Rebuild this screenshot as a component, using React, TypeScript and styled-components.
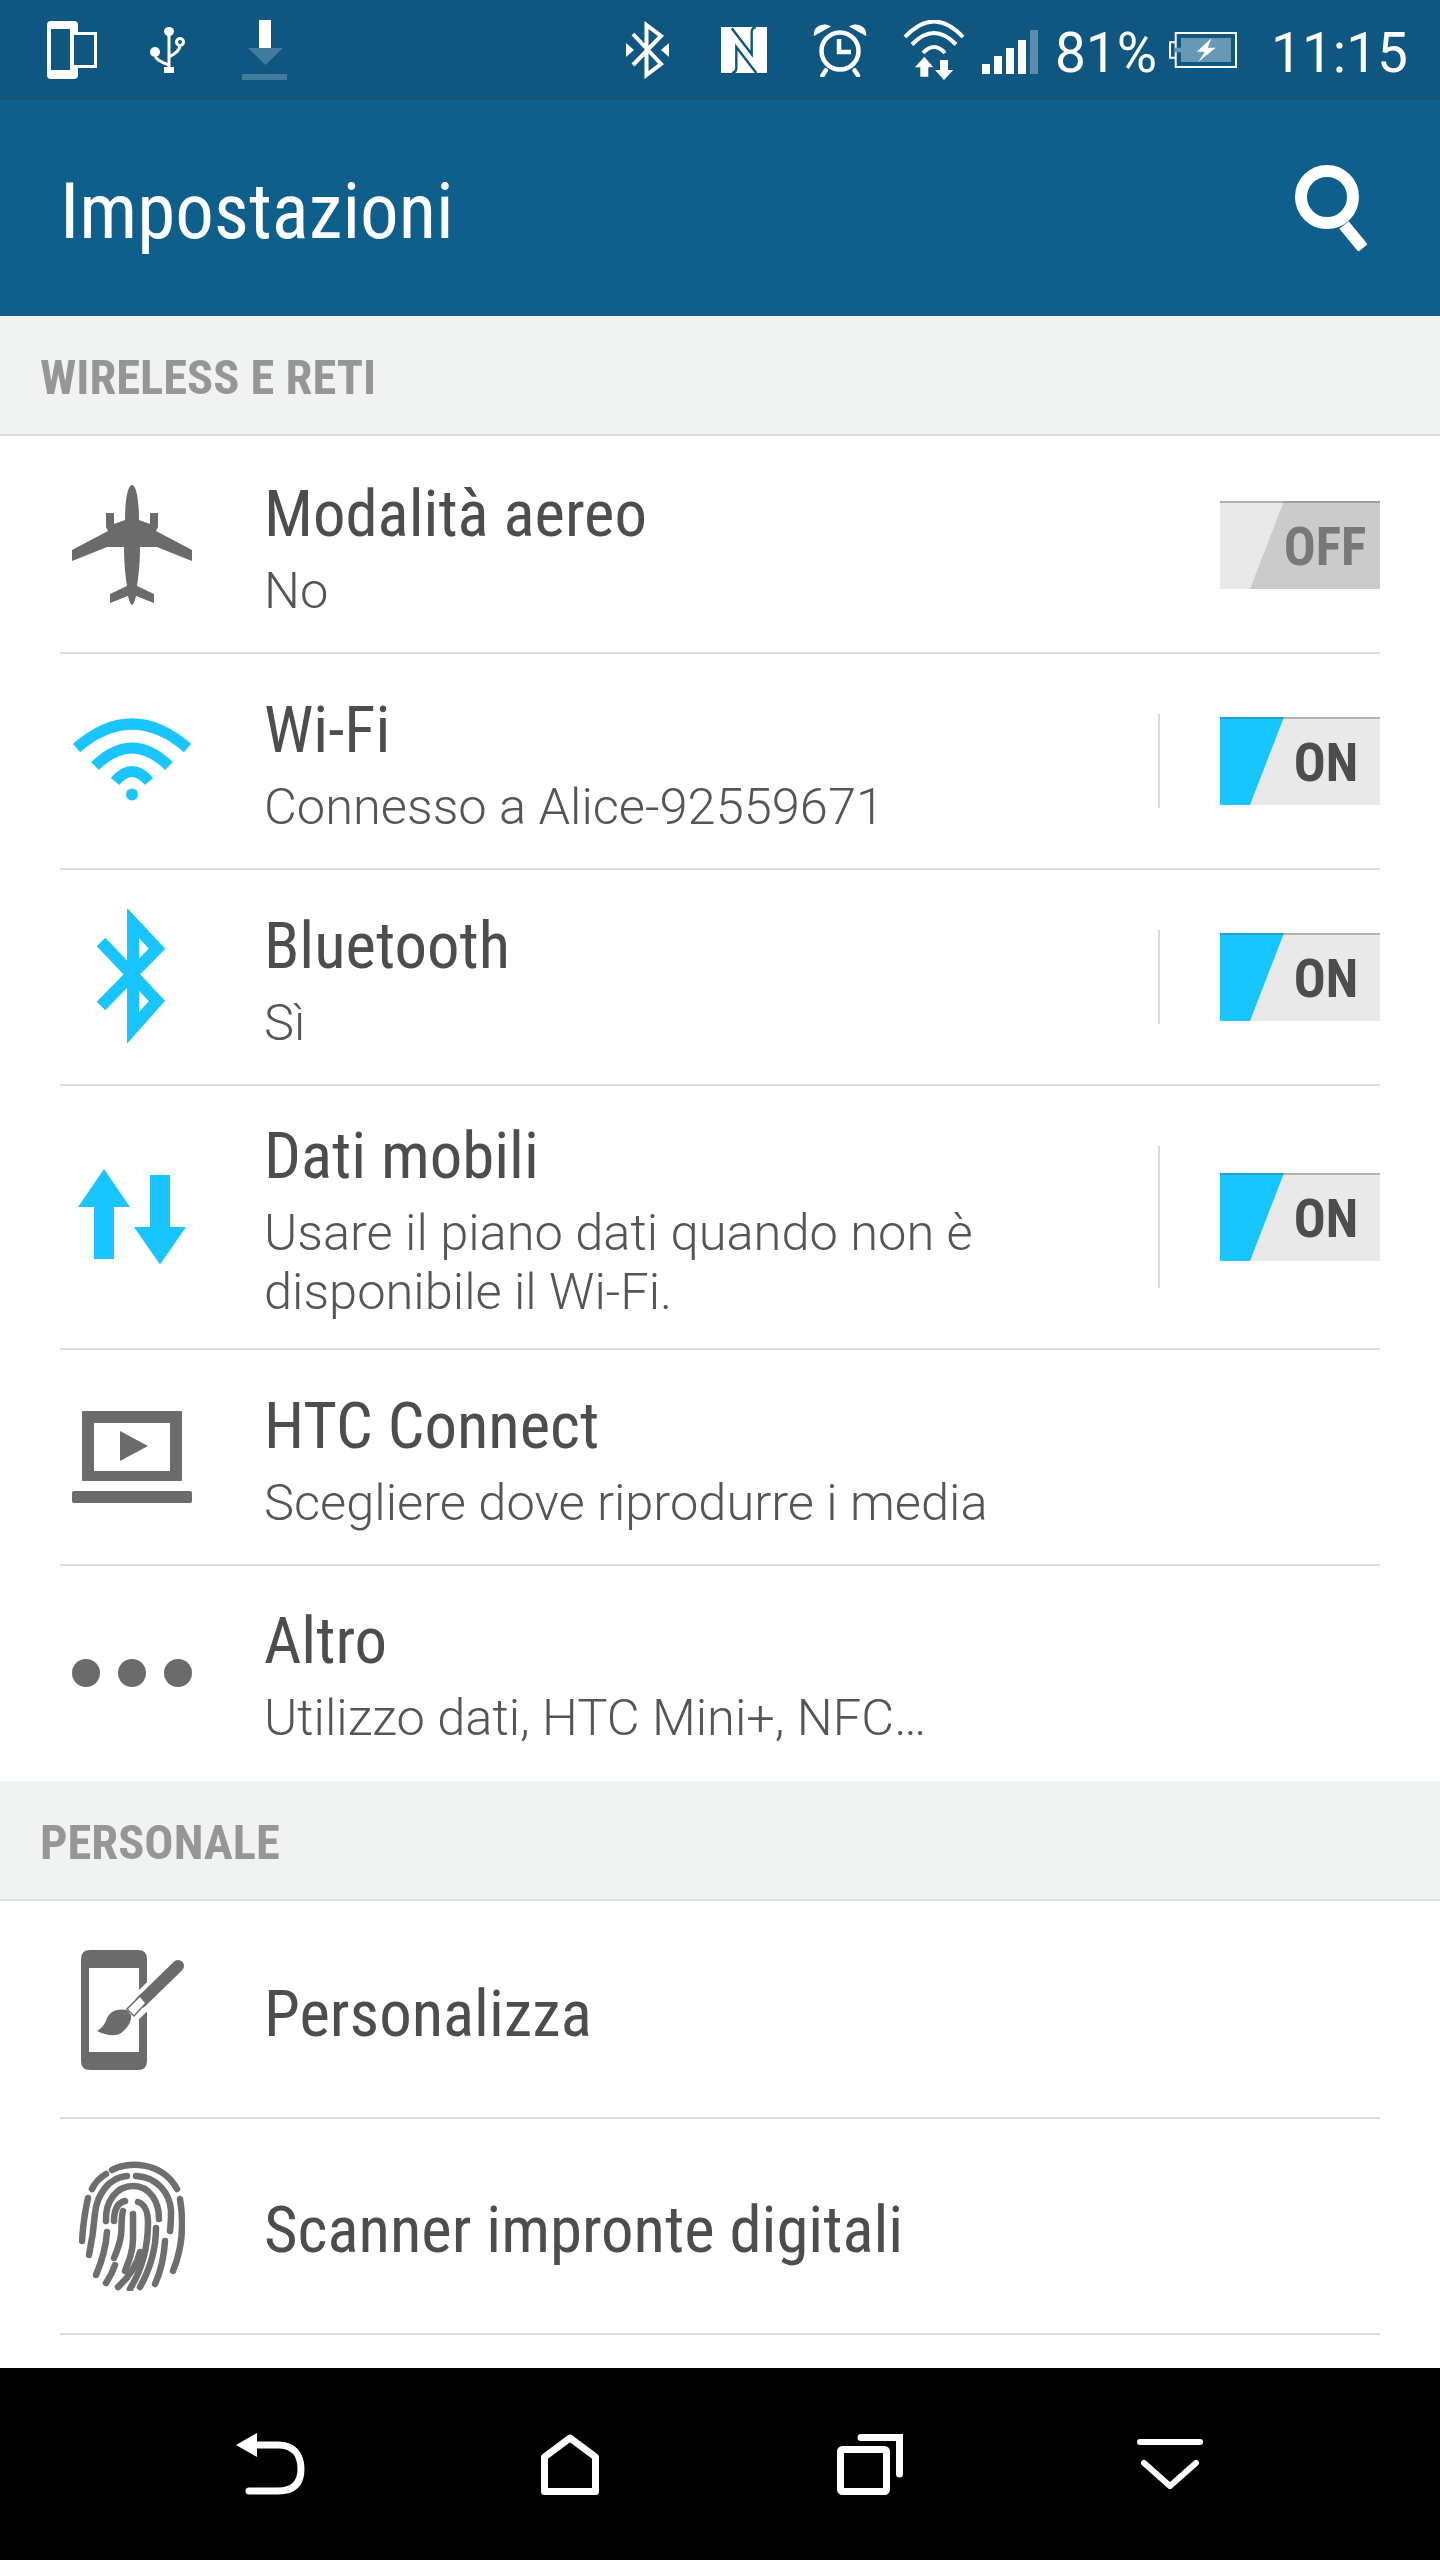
import React from 'react';
import styled, { createGlobalStyle } from 'styled-components';

const GlobalStyle = createGlobalStyle`
  html, body { margin: 0; padding: 0; background: #fff; }
  * { box-sizing: border-box; }
  #root { height: 2560px; }
`;

const Screen = styled.div`
  width: 1440px;
  height: 2560px;
  display: flex;
  flex-direction: column;
  overflow: hidden;
  background: #fff;
  font-family: Roboto, "Liberation Sans", sans-serif;
`;

const StatusBar = styled.div`
  height: 100px;
  flex: none;
  display: flex;
  align-items: center;
  justify-content: space-between;
  background: #0f5680;
  color: #fff;
  padding: 0 32px 0 47px;
`;

const StatusGroup = styled.div`
  display: flex;
  align-items: center;
`;

const BarIcon = styled.svg<{ $gap?: number }>`
  display: block;
  flex: none;
  margin-left: ${({ $gap }) => $gap ?? 0}px;
`;

const StatusText = styled.span<{ $gap: number }>`
  font-size: 55px;
  font-weight: 400;
  line-height: 64px;
  padding-top: 6px;
  margin-left: ${({ $gap }) => $gap}px;
  white-space: nowrap;
`;

const AppHeader = styled.header`
  height: 216px;
  flex: none;
  display: flex;
  align-items: center;
  justify-content: space-between;
  background: #0f5f8c;
  padding: 0 73px 0 60px;
`;

const HeaderTitle = styled.h1`
  margin: 0;
  padding-top: 8px;
  color: #fff;
  font-size: 77px;
  font-weight: 400;
  font-stretch: condensed;
  line-height: 90px;
`;

const SettingsList = styled.main`
  flex: 1;
  overflow: hidden;
`;

const SectionHeader = styled.div`
  height: 120px;
  margin-bottom: 2px;
  display: flex;
  align-items: center;
  padding: 4px 0 0 40px;
  background: #f1f3f2;
  border-bottom: 2px solid #ddd;
  color: #969696;
  font-size: 48.5px;
  font-weight: 700;
  font-stretch: condensed;
`;

const Row = styled.div<{ $tall?: boolean; $last?: boolean }>`
  height: ${({ $tall, $last }) => ($tall ? 264 : $last ? 215 : 216)}px;
  margin: 0 60px;
  display: flex;
  align-items: center;
  border-bottom: 2px solid ${({ $last }) => ($last ? 'transparent' : '#ddd')};
`;

const IconSlot = styled.div`
  width: 144px;
  flex: none;
  display: flex;
  align-items: center;
  justify-content: center;
`;

const RowIcon = styled.svg`
  display: block;
  flex: none;
`;

const RowText = styled.div`
  flex: 1;
  min-width: 0;
  margin-left: 60px;
  padding-top: 7px;
`;

const RowTitle = styled.div`
  color: #4d4d4d;
  font-size: 64.8px;
  font-weight: 400;
  font-stretch: condensed;
  line-height: 72px;
`;

const RowSubtitle = styled.div`
  margin-top: 11px;
  color: #555;
  font-size: 50.6px;
  font-weight: 300;
  line-height: 59px;
`;

const Separator = styled.div<{ $tall?: boolean }>`
  width: 2px;
  height: ${({ $tall }) => ($tall ? 142 : 94)}px;
  margin-right: 60px;
  background: #ddd;
  flex: none;
`;

const Toggle = styled.div<{ $on?: boolean }>`
  position: relative;
  width: 160px;
  height: 88px;
  flex: none;
  display: flex;
  align-items: center;
  justify-content: center;
  padding: 2px 0 0 ${({ $on }) => ($on ? 52 : 50)}px;
  border-top: 2px solid ${({ $on }) => ($on ? '#b3b3b3' : '#9e9e9e')};
  background: ${({ $on }) => ($on ? '#e9e9e9' : '#cbcbcb')};

  &::before {
    content: '';
    position: absolute;
    left: 0;
    top: -2px;
    width: 100%;
    height: 88px;
    clip-path: polygon(0 0, 64px 0, 30px 100%, 0 100%);
    background: ${({ $on }) =>
      $on
        ? 'linear-gradient(#1e9fcf 2px, #19c5ff 2px)'
        : 'linear-gradient(#b0b0b0 2px, #e9e9e9 2px)'};
  }
`;

const ToggleLabel = styled.span<{ $on?: boolean }>`
  position: relative;
  color: ${({ $on }) => ($on ? '#4d4d4d' : '#787878')};
  font-size: 53px;
  font-weight: 700;
  font-stretch: condensed;
  line-height: 1;
`;

const NavBar = styled.nav`
  height: 192px;
  flex: none;
  display: grid;
  grid-template-columns: repeat(4, 300px);
  justify-content: center;
  align-items: center;
  justify-items: center;
  background: #000;
`;

const BLUE = '#19c5ff';
const GREY = '#6b6b6b';
const DARK = '#0f5680';

const Plane = () => (
  <RowIcon width="120" height="120" viewBox="0 0 120 120" fill={GREY}>
    <path d="M60 0C56 0 53 14 53 35L42 39V28H34V42L36 46L0 65V76L35 62H52C52 80 54 95 55 101L38 109V118L56 111C57 116 59 120 60 120C61 120 63 116 64 111L82 118V109L65 101C66 95 68 80 68 62H85L120 76V65L84 46L86 42V28H78V39L67 35C67 14 64 0 60 0Z" />
  </RowIcon>
);

const Wifi = () => (
  <RowIcon width="118" height="87" viewBox="0 0 118 87" fill="none" stroke={BLUE} strokeWidth="11">
    <path d="M3.500 30Q59 -18 114.500 30" />
    <path d="M22 48Q59 12 96 48" />
    <path d="M42 63.500Q59 43.500 76 63.500" />
    <circle cx="59" cy="76.500" r="6" fill={BLUE} stroke="none" />
  </RowIcon>
);

const Bluetooth = () => (
  <RowIcon width="71" height="136" viewBox="0 0 71 136" fill="none" stroke={BLUE} strokeWidth="12">
    <path d="M4 97L60 39.600L36 14V119L60 92L4 33" />
  </RowIcon>
);

const DataArrows = () => (
  <RowIcon width="108" height="96" viewBox="0 0 108 96" fill={BLUE}>
    <path d="M26 0L52 38H36V90H16V38H0Z" />
    <path d="M72 6H92V58H108L82 95.500L56 58H72Z" />
  </RowIcon>
);

const Connect = () => (
  <RowIcon width="120" height="92" viewBox="0 0 120 92" fill={GREY}>
    <path fillRule="evenodd" d="M10 1Q10 0 11 0H109Q110 0 110 1V69Q110 70 109 70H11Q10 70 10 69ZM22 12V60H98V12Z" />
    <path d="M48 20L76 35L48 50Z" />
    <rect y="80" width="120" height="12" rx="2" />
  </RowIcon>
);

const Dots = () => (
  <RowIcon width="120" height="28" viewBox="0 0 120 28" fill={GREY}>
    <circle cx="14" cy="14" r="14" />
    <circle cx="60" cy="14" r="14" />
    <circle cx="106" cy="14" r="14" />
  </RowIcon>
);

const Brush = () => (
  <RowIcon width="103" height="120" viewBox="0 0 103 120">
    <path
      fill={GREY}
      fillRule="evenodd"
      d="M9 0H57Q66 0 66 9V111Q66 120 57 120H9Q0 120 0 111V9Q0 0 9 0ZM8 18V102H58V18Z"
    />
    <path d="M40 72L102 12" stroke="#fff" strokeWidth="21" />
    <path d="M60 52L97 16" stroke={GREY} strokeWidth="12" strokeLinecap="round" />
    <path d="M59 46L65 53L53 66L46 59Z" fill="#fff" stroke={GREY} strokeWidth="1.500" />
    <path d="M46 60C37 58 29 61 26 68C24 74 21 78 16 81C24 85 34 87 40 83C47 78 51 71 50 65Z" fill={GREY} />
  </RowIcon>
);

const Fingerprint = () => (
  <RowIcon
    width="106"
    height="130"
    viewBox="0 0 106 130"
    fill="none"
    stroke="#6e6e6e"
    strokeWidth="6.500"
    strokeLinecap="round"
  >
    <path d="M33 9C47 1 82 -1 98 28" />
    <path d="M27 13C20 17 16 22 13 28" />
    <path d="M9 37C6 50 4 65 3 80" />
    <path d="M101 38C105 62 103 88 94 110" />
    <path d="M48 15C30 16 18 34 16 52C15 65 13 80 10 94" />
    <path d="M57 15C78 16 91 32 92 50C92 56 92 62 91 70" />
    <path d="M27 60C26 40 38 25 54 25C72 25 80 42 80 58" />
    <path d="M28 71C27 86 23 100 17 114" />
    <path d="M77 67C77 90 71 108 61 126" />
    <path d="M86 80C85 96 82 110 76 123" />
    <path d="M46 40C38 42 35 50 35 60" />
    <path d="M59 41C66 43 69 52 69 62C69 90 62 110 51 128" />
    <path d="M54 53V78C54 90 50 100 46 110" />
    <path d="M44 50C42 56 43 66 42 74C41 82 38 90 35 97" />
    <path d="M36 104C34 110 31 116 27 122" />
    <path d="M61 91C58 104 50 116 39 126" />
  </RowIcon>
);

const Search = () => (
  <BarIcon width="72" height="86" viewBox="0 0 72 86" fill="none" stroke="#fff" strokeWidth="12">
    <circle cx="32" cy="32" r="26" />
    <path d="M49 60L68 83" />
  </BarIcon>
);

const BackIcon = () => (
  <BarIcon width="69" height="62" viewBox="0 0 69 62" fill="none" stroke="#fff" strokeWidth="7">
    <path d="M20 12H42C58 12 65 22 65 36C65 50 58 58 42 58H13" strokeLinecap="round" />
    <path d="M21 0V24L0 12Z" fill="#fff" stroke="none" />
  </BarIcon>
);

const HomeIcon = () => (
  <BarIcon width="58" height="61" viewBox="0 0 58 61" fill="none" stroke="#fff" strokeWidth="7">
    <path d="M29 4L54.500 23V57.500H3.500V23Z" strokeLinejoin="round" />
  </BarIcon>
);

const RecentIcon = () => (
  <BarIcon width="66" height="61" viewBox="0 0 66 61" fill="none" stroke="#fff" strokeWidth="7">
    <rect x="3.500" y="15.500" width="46" height="42" rx="2" />
    <path d="M24 3.500H62.500V40" strokeLinecap="round" />
  </BarIcon>
);

const HideIcon = () => (
  <BarIcon width="66" height="50" viewBox="0 0 66 50" fill="none" stroke="#fff" strokeWidth="6" strokeLinecap="round">
    <path d="M3 3H63" />
    <path d="M7 24L33 47L59 24" />
  </BarIcon>
);

type SettingRow = {
  title: string;
  subtitle?: string;
  icon: React.ReactNode;
  toggle?: 'on' | 'off';
  separator?: boolean;
  tall?: boolean;
  last?: boolean;
};

const wireless: SettingRow[] = [
  { title: 'Modalità aereo', subtitle: 'No', icon: <Plane />, toggle: 'off' },
  { title: 'Wi-Fi', subtitle: 'Connesso a Alice-92559671', icon: <Wifi />, toggle: 'on', separator: true },
  { title: 'Bluetooth', subtitle: 'Sì', icon: <Bluetooth />, toggle: 'on', separator: true },
  {
    title: 'Dati mobili',
    subtitle: 'Usare il piano dati quando non è disponibile il Wi-Fi.',
    icon: <DataArrows />,
    toggle: 'on',
    separator: true,
    tall: true,
  },
  { title: 'HTC Connect', subtitle: 'Scegliere dove riprodurre i media', icon: <Connect /> },
  { title: 'Altro', subtitle: 'Utilizzo dati, HTC Mini+, NFC…', icon: <Dots />, last: true },
];

const personal: SettingRow[] = [
  { title: 'Personalizza', icon: <Brush /> },
  { title: 'Scanner impronte digitali', icon: <Fingerprint /> },
];

const SettingItem = ({ item }: { item: SettingRow }) => (
  <Row $tall={item.tall} $last={item.last}>
    <IconSlot>{item.icon}</IconSlot>
    <RowText>
      <RowTitle>{item.title}</RowTitle>
      {item.subtitle && <RowSubtitle>{item.subtitle}</RowSubtitle>}
    </RowText>
    {item.separator && <Separator $tall={item.tall} />}
    {item.toggle && (
      <Toggle $on={item.toggle === 'on'}>
        <ToggleLabel $on={item.toggle === 'on'}>{item.toggle === 'on' ? 'ON' : 'OFF'}</ToggleLabel>
      </Toggle>
    )}
  </Row>
);

export default function App() {
  return (
    <Screen>
      <GlobalStyle />
      <StatusBar>
        <StatusGroup>
          <BarIcon width="50" height="58" viewBox="0 0 50 58">
            <rect width="31" height="58" rx="4" fill="#fff" />
            <rect x="4" y="8" width="19" height="41" fill={DARK} />
            <rect x="23" y="11" width="27" height="36" fill="#fff" />
            <rect x="27" y="14" width="20" height="30" fill={DARK} />
          </BarIcon>
          <BarIcon $gap={53} width="36" height="46" viewBox="0 0 36 46" fill="none" stroke="#fff" strokeWidth="3">
            <path d="M19 4V42" />
            <path d="M5 27C5 33 12 35 19 38" />
            <path d="M30 18C30 24 24 27 19 30" />
            <ellipse cx="19" cy="4.500" rx="5" ry="4.500" fill="#fff" stroke="none" />
            <ellipse cx="5" cy="25" rx="5" ry="5" fill="#fff" stroke="none" />
            <circle cx="30" cy="15" r="3.500" />
            <rect x="14" y="40" width="10" height="6" fill="#fff" stroke="none" />
          </BarIcon>
          <BarIcon $gap={56} width="45" height="60" viewBox="0 0 45 60" fill="#fff">
            <rect x="17" width="12" height="28" />
            <path d="M6 28H41L23.500 45Z" opacity="0.22" />
            <rect y="54" width="45" height="6" opacity="0.22" />
          </BarIcon>
        </StatusGroup>
        <StatusGroup>
          <BarIcon width="43" height="58" viewBox="0 0 43 58" fill="none" stroke="#fff" strokeWidth="4">
            <path d="M7 13L35 43L20.500 54V4L35 15L7 44" />
            <path d="M0 22L8 29L0 36Z" fill="#fff" stroke="none" />
            <path d="M43 22L35 29L43 36Z" fill="#fff" stroke="none" />
          </BarIcon>
          <BarIcon $gap={52} width="46" height="46" viewBox="0 0 46 46">
            <rect width="46" height="46" fill="#fff" />
            <path
              d="M10.700 1.300L30.700 27.300V4.700Q30.700 0.700 35 0M35.300 46L15.300 20V41.300Q15.300 45.300 11 46"
              fill="none"
              stroke={DARK}
              strokeWidth="2.400"
            />
          </BarIcon>
          <BarIcon $gap={46} width="55" height="54" viewBox="0 0 55 54" fill="none" stroke="#fff" strokeWidth="4.500">
            <circle cx="27" cy="28" r="18.500" />
            <path d="M26 16V29H38" />
            <path d="M12.700 47.400L9.400 52.400M41.700 47.400L45 52.400" strokeLinecap="round" />
            <path d="M1 13C-1 4 10 -2 18 3.500Z" fill="#fff" stroke="none" />
            <path d="M53 13C55 4 44 -2 36 3.500Z" fill="#fff" stroke="none" />
          </BarIcon>
          <BarIcon $gap={34} width="64" height="60" viewBox="0 0 64 60">
            <g fill="none" stroke="#fff" strokeWidth="4">
              <path d="M3 17Q32 -14 61 17" />
              <path d="M10 24.500Q32 1.500 54 24.500" />
              <path d="M21 33Q32 21 43 33" />
            </g>
            <path d="M22.300 36.700L31.300 47.300H26.300V56.700H18.300V47.300H13Z" fill="#fff" />
            <path d="M38 40H46V50H51.300L42 60L33 50H38Z" fill="#fff" />
          </BarIcon>
          <BarIcon $gap={16} width="56" height="48" viewBox="0 0 56 48" fill="#fff">
            <rect y="38" width="8" height="10" />
            <rect x="12" y="30" width="8" height="18" />
            <rect x="24" y="22" width="8" height="26" />
            <rect x="36" y="14" width="8" height="34" />
            <rect x="48" y="4" width="8" height="44" opacity="0.32" />
          </BarIcon>
          <StatusText $gap={17}>81%</StatusText>
          <BarIcon $gap={12} width="68" height="36" viewBox="0 0 68 36">
            <rect x="6.700" y="1" width="60.300" height="34" fill="none" stroke="#fff" strokeWidth="2" />
            <path d="M6.700 10.300H1V25.700H6.700" fill="none" stroke="#fff" strokeWidth="2" />
            <rect x="12" y="6" width="50" height="24" fill="#6898b3" />
            <rect x="6" y="15.700" width="6" height="4.600" fill="#6898b3" />
            <path d="M42.300 6.300L27.700 19.700H35.700L29.300 30L46.700 15.700H38.700Z" fill="#fff" />
          </BarIcon>
          <StatusText $gap={34}>11:15</StatusText>
        </StatusGroup>
      </StatusBar>

      <AppHeader>
        <HeaderTitle>Impostazioni</HeaderTitle>
        <Search />
      </AppHeader>

      <SettingsList>
        <SectionHeader>WIRELESS E RETI</SectionHeader>
        {wireless.map((item) => (
          <SettingItem key={item.title} item={item} />
        ))}
        <SectionHeader>PERSONALE</SectionHeader>
        {personal.map((item) => (
          <SettingItem key={item.title} item={item} />
        ))}
      </SettingsList>

      <NavBar>
        <BackIcon />
        <HomeIcon />
        <RecentIcon />
        <HideIcon />
      </NavBar>
    </Screen>
  );
}
